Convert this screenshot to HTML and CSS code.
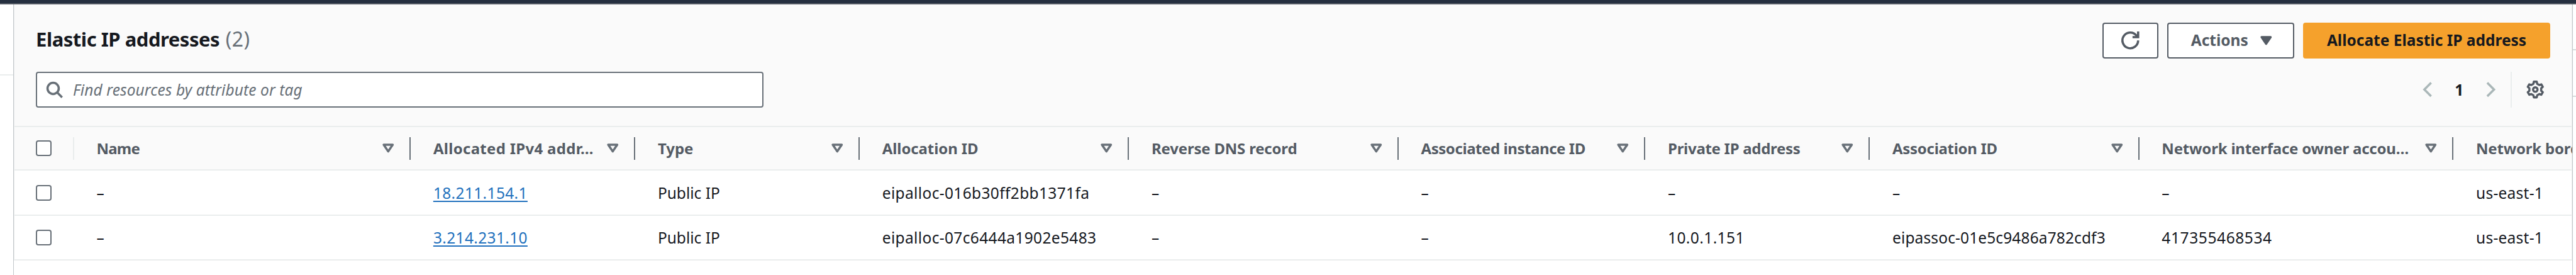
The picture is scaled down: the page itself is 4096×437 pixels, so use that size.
FILE: index.html
```
<!DOCTYPE html>
<html lang="en">
<head>
<meta charset="utf-8">
<title>Elastic IP addresses</title>
<link rel="stylesheet" href="styles.css">
</head>
<body>
<svg class="defs" aria-hidden="true">
  <symbol id="sort" viewBox="0 0 16 16"><path d="M4 5h8l-4 6z" fill="none" stroke="currentColor" stroke-width="2" stroke-linejoin="round"/></symbol>
</svg>
<div class="topbar"></div>
<div class="layout">
  <aside class="side-left"></aside>
  <main class="panel">
    <header class="panel-header">
      <div class="title-row">
        <h1 class="title">Elastic IP addresses <span class="counter">(2)</span></h1>
        <div class="actions">
          <button class="btn btn-icon" aria-label="Refresh">
            <svg class="icon" viewBox="0 0 16 16" fill="none" stroke="currentColor" stroke-width="2"><path d="M15 8a7 7 0 1 1-1.6-4.5L15 5"/><path d="M10 5h5V0"/></svg>
          </button>
          <button class="btn btn-menu"><span class="label">Actions</span>
            <svg class="icon" viewBox="0 0 16 16"><path d="M4 5h8l-4 6z" fill="currentColor" stroke="currentColor" stroke-width="2" stroke-linejoin="round"/></svg>
          </button>
          <button class="btn btn-primary"><span class="label">Allocate Elastic IP address</span></button>
        </div>
      </div>
      <div class="filter-row">
        <div class="search">
          <svg class="icon" viewBox="0 0 16 16" fill="none" stroke="currentColor" stroke-width="2"><circle cx="7" cy="7" r="5"/><path d="m15 15-4.5-4.5"/></svg>
          <span class="placeholder">Find resources by attribute or tag</span>
        </div>
        <div class="pager">
          <svg class="icon arrow" viewBox="0 0 16 16" fill="none" stroke="currentColor" stroke-width="2"><path d="M11 2 5 8l6 6"/></svg>
          <span class="page">1</span>
          <svg class="icon arrow" viewBox="0 0 16 16" fill="none" stroke="currentColor" stroke-width="2"><path d="m5 2 6 6-6 6"/></svg>
          <span class="rule"></span>
          <svg class="icon gear" viewBox="0 0 16 16" fill="none" stroke="currentColor" stroke-width="1.9" stroke-linejoin="round"><path d="M6.7 1H9.3L9.7 2.9 11.57 3.98 13.41 3.38 14.71 5.62 13.27 6.92V9.08L14.71 10.38 13.41 12.62 11.57 12.02 9.7 13.1 9.3 15H6.7L6.3 13.1 4.43 12.02 2.59 12.62 1.29 10.38 2.73 9.08V6.92L1.29 5.62 2.59 3.38 4.43 3.98 6.3 2.9z"/><circle cx="8" cy="8" r="2"/></svg>
        </div>
      </div>
    </header>
    <section class="table">
      <div class="row head">
        <div class="cell check"><span class="box"></span><i class="divider"></i></div>
        <div class="cell name"><span class="label">Name</span><svg class="icon"><use href="#sort"/></svg><i class="divider"></i></div>
        <div class="cell addr"><span class="label">Allocated IPv4 addr…</span><svg class="icon"><use href="#sort"/></svg><i class="divider"></i></div>
        <div class="cell type"><span class="label">Type</span><svg class="icon"><use href="#sort"/></svg><i class="divider"></i></div>
        <div class="cell alloc"><span class="label">Allocation ID</span><svg class="icon"><use href="#sort"/></svg><i class="divider"></i></div>
        <div class="cell dns"><span class="label">Reverse DNS record</span><svg class="icon"><use href="#sort"/></svg><i class="divider"></i></div>
        <div class="cell instance"><span class="label">Associated instance ID</span><svg class="icon"><use href="#sort"/></svg><i class="divider"></i></div>
        <div class="cell private"><span class="label">Private IP address</span><svg class="icon"><use href="#sort"/></svg><i class="divider"></i></div>
        <div class="cell assoc"><span class="label">Association ID</span><svg class="icon"><use href="#sort"/></svg><i class="divider"></i></div>
        <div class="cell owner"><span class="label">Network interface owner accou…</span><svg class="icon"><use href="#sort"/></svg><i class="divider"></i></div>
        <div class="cell group"><span class="label">Network bord</span></div>
      </div>
      <div class="row first">
        <div class="cell check"><span class="box"></span></div>
        <div class="cell">–</div>
        <div class="cell addr"><a class="link">18.211.154.1</a></div>
        <div class="cell">Public IP</div>
        <div class="cell alloc">eipalloc-016b30ff2bb1371fa</div>
        <div class="cell">–</div>
        <div class="cell">–</div>
        <div class="cell">–</div>
        <div class="cell">–</div>
        <div class="cell">–</div>
        <div class="cell group">us-east-1</div>
      </div>
      <div class="row second">
        <div class="cell check"><span class="box"></span></div>
        <div class="cell">–</div>
        <div class="cell addr"><a class="link">3.214.231.10</a></div>
        <div class="cell">Public IP</div>
        <div class="cell alloc">eipalloc-07c6444a1902e5483</div>
        <div class="cell">–</div>
        <div class="cell">–</div>
        <div class="cell private">10.0.1.151</div>
        <div class="cell assoc">eipassoc-01e5c9486a782cdf3</div>
        <div class="cell owner">417355468534</div>
        <div class="cell group">us-east-1</div>
      </div>
    </section>
  </main>
  <aside class="side-right"><span class="line one"></span><span class="line two"></span></aside>
</div>
</body>
</html>
```
FILE: styles.css
```
* { box-sizing: border-box; }
body {
  margin: 0;
  height: 437px;
  overflow: hidden;
  background: #fff;
  color: #16191f;
  font-family: "Noto Sans", "Open Sans", sans-serif;
  font-size: 24.5px;
  font-variant-ligatures: none;
}
.defs { display: none; }
.icon { width: 28.55px; height: 28.55px; flex: none; display: block; overflow: visible; }

.topbar { height: 7px; background: #252f3f; border-bottom: 2px solid #545b64; }
.layout { display: grid; grid-template-columns: 21px 4070px 5px; height: 430px; }
.side-left { height: 113px; border-bottom: 2px solid #eaeded; }
.side-right { display: flex; flex-direction: column; }
.line { height: 2px; background: #d5dbdb; }
.line.one { margin-top: 71px; }
.line.two { margin-top: 72px; }

.panel {
  border: solid #c2c7ca;
  border-width: 0 1px;
  overflow: hidden;
  background: #fff;
}
.panel-header {
  height: 195px;
  padding: 29px 35px 0;
  background: #fafafa;
  border-bottom: 2px solid #eaeded;
  box-shadow: inset 1px 0 #e8eaeb, inset -1px 0 #e8eaeb;
}
.title-row { display: flex; justify-content: space-between; align-items: center; height: 57px; }
.title { margin: 0 0 5px; font-size: 31px; line-height: 40px; letter-spacing: -.47px; white-space: nowrap; }
.counter { margin-left: 2px; font-size: 32px; font-weight: 400; letter-spacing: .4px; color: #687078; }
.actions { display: flex; gap: 14px; }
.btn {
  display: flex;
  align-items: center;
  height: 57px;
  padding: 0;
  border: 2px solid #545b64;
  border-radius: 4px;
  background: #fff;
  color: #545b64;
  font: bold 24.5px "Noto Sans", "Open Sans", sans-serif;
  white-space: nowrap;
}
.btn .label { margin-top: -2px; }
.btn-icon { width: 89px; justify-content: center; }
.btn-menu { width: 202px; padding: 0 28.5px 0 35.7px; justify-content: space-between; }
.btn-primary { width: 393px; justify-content: center; border-color: #f5a12c; background: #f5a12c; color: #16191f; }

.filter-row { display: flex; justify-content: space-between; margin-top: 21px; height: 57px; }
.search {
  display: flex;
  align-items: center;
  gap: 16px;
  width: 1157px;
  padding-left: 12.5px;
  border: 2px solid #687078;
  border-radius: 4px;
  background: #fff;
  color: #687078;
}
.placeholder { font-style: italic; letter-spacing: .1px; }
.pager { display: flex; align-items: center; height: 57px; margin-right: 9px; color: #545b64; }
.arrow { color: #aab7b8; }
.page { width: 71.2px; margin-top: -1px; text-align: center; font-weight: 700; color: #16191f; }
.rule { width: 2px; height: 57px; margin: 0 23px 0 18px; background: #eaeded; }

.row {
  display: grid;
  grid-template-columns: 95.8px 535.4px 357px 356.9px 428.3px 428.4px 392.6px 357px 428.3px 499.7px 188.6px;
  border-bottom: 2px solid #eaeded;
  box-shadow: inset 1px 0 #e8eaeb, inset -1px 0 #e8eaeb;
}
.head { height: 69px; background: #fafafa; color: #545b64; font-size: 24px; font-weight: 700; letter-spacing: -.2px; }
.first { height: 72px; }
.second { height: 71px; }
.cell { display: flex; align-items: center; min-width: 0; padding-left: 35.7px; white-space: nowrap; overflow: hidden; }
.check { padding-left: 35px; justify-content: space-between; }
.box { width: 25px; height: 25px; border: 2px solid #687078; border-radius: 4px; background: #fff; }
.head .label { flex: 1; }
.head .icon { margin-right: 19.6px; color: #687078; }
.divider { width: 2px; height: 36px; background: #687078; }
.check .divider { background: #eaeded; }
.link { color: #2271bd; text-decoration: underline; text-decoration-thickness: 2px; text-underline-offset: 3px; text-decoration-skip-ink: none; }

.cell.addr { letter-spacing: .35px; }
.cell.alloc { letter-spacing: .35px; }
.cell.private { letter-spacing: .4px; }
.cell.assoc { letter-spacing: .12px; }
.cell.owner { letter-spacing: .6px; }
.cell.group { letter-spacing: .25px; }
.head .name { letter-spacing: -.75px; }
.head .addr { letter-spacing: .3px; }
.head .type { letter-spacing: 0; }
.head .alloc { letter-spacing: -.1px; }
.head .instance { letter-spacing: -.43px; }
.head .private { letter-spacing: -.29px; }
.head .assoc { letter-spacing: -.3px; }
.head .owner, .head .group { letter-spacing: -.2px; }
```
